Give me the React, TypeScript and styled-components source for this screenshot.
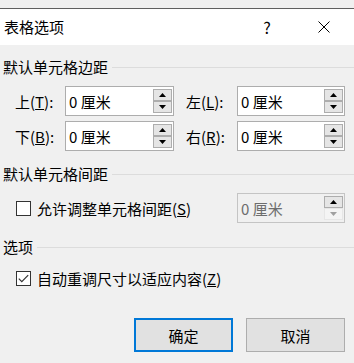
import React from 'react';
import styled, { createGlobalStyle } from 'styled-components';

const GlobalStyle = createGlobalStyle`
  html, body {
    margin: 0;
    padding: 0;
    background: #f0f0f0;
    overflow: hidden;
  }
  body {
    font-family: "Noto Sans CJK SC", "Microsoft YaHei", sans-serif;
    font-size: 15px;
    color: #000;
  }
`;

const Window = styled.div`
  width: 354px;
  margin-top: 8px;
  border-top: 1px solid #5f5f5f;
  background: #f0f0f0;
`;

const TitleBar = styled.div`
  height: 36px;
  background: #fff;
  display: flex;
  align-items: center;
  padding-left: 4px;
`;

const Title = styled.div`
  flex: 1;
  line-height: 20px;
`;

const HelpButton = styled.div`
  width: 8px;
  margin-right: 47px;
  font-size: 16px;
  line-height: 20px;
  text-align: center;
`;

const CloseButton = styled.div`
  width: 12px;
  height: 12px;
  margin-right: 24px;
  display: flex;
`;

const Content = styled.div`
  display: flex;
  flex-direction: column;
`;

const SectionHeading = styled.div<{ $top: number }>`
  display: flex;
  align-items: center;
  gap: 4px;
  height: 20px;
  padding-left: 3px;
  margin-top: ${p => p.$top}px;
  line-height: 20px;

  &::after {
    content: '';
    flex: 1;
    height: 1px;
    background: #dcdcdc;
  }
`;

const MarginGrid = styled.div`
  display: grid;
  grid-template-columns: 50px 109px 63px 108px;
  grid-auto-rows: 30px;
  row-gap: 5px;
  padding-left: 15px;
  margin-top: 9px;
`;

const FieldLabel = styled.label<{ $indent?: number }>`
  display: flex;
  align-items: center;
  padding-left: ${p => p.$indent ?? 0}px;
  white-space: nowrap;
`;

const SpinBox = styled.div<{ $disabled?: boolean }>`
  box-sizing: border-box;
  height: 30px;
  display: flex;
  align-items: center;
  padding-left: 3px;
  border: 1px solid ${p => (p.$disabled ? '#c4c4c4' : '#adadad')};
  background: ${p => (p.$disabled ? '#f0f0f0' : '#fff')};
  color: ${p => (p.$disabled ? '#6d6d6d' : '#000')};
`;

const SpinValue = styled.span`
  flex: 1;
  white-space: nowrap;
`;

const Spinner = styled.div`
  display: flex;
  flex-direction: column;
  margin-right: 1px;
`;

const SpinButton = styled.div<{ $faded?: boolean }>`
  box-sizing: border-box;
  width: 19px;
  height: 12px;
  display: flex;
  align-items: center;
  justify-content: center;
  border: 1px solid ${p => (p.$faded ? '#e6e6e6' : '#adadad')};
  background: ${p => (p.$faded ? '#f4f4f4' : '#e5e5e5')};
  color: ${p => (p.$faded ? '#a0a0a0' : '#000')};
`;

const CheckRow = styled.div<{ $top: number; $height: number }>`
  display: flex;
  align-items: center;
  height: ${p => p.$height}px;
  margin-top: ${p => p.$top}px;
  padding: 0 9px 0 16px;
`;

const CheckBox = styled.span`
  box-sizing: border-box;
  width: 15px;
  height: 15px;
  border: 1px solid #333;
  background: #fff;
  display: flex;
  align-items: center;
  justify-content: center;
  flex-shrink: 0;
`;

const CheckLabel = styled.label`
  margin-left: 6px;
  flex: 1;
  white-space: nowrap;
`;

const SpacingBox = styled(SpinBox)`
  width: 108px;
`;

const ButtonRow = styled.div`
  display: flex;
  justify-content: flex-end;
  gap: 13px;
  padding-right: 9px;
  margin-top: 32px;
`;

const DialogButton = styled.button<{ $primary?: boolean }>`
  box-sizing: border-box;
  width: 99px;
  height: 34px;
  font: inherit;
  color: #000;
  background: #e1e1e1;
  border: ${p => (p.$primary ? '2px solid #0078d7' : '1px solid #adadad')};
  padding: 0;
`;

const Arrow = ({ up }: { up?: boolean }) => (
  <svg width="7" height="4" viewBox="0 0 7 4">
    <polygon points={up ? '0,4 7,4 3.5,0' : '0,0 7,0 3.5,4'} fill="currentColor" />
  </svg>
);

const Spin = ({ disabled }: { disabled?: boolean }) => (
  <Spinner>
    <SpinButton>
      <Arrow up />
    </SpinButton>
    <SpinButton $faded={disabled}>
      <Arrow />
    </SpinButton>
  </Spinner>
);

const margins = [
  { label: '上', key: 'T', side: '左', sideKey: 'L' },
  { label: '下', key: 'B', side: '右', sideKey: 'R' },
];

export default function App() {
  return (
    <>
      <GlobalStyle />
      <Window>
        <TitleBar>
          <Title>表格选项</Title>
          <HelpButton>?</HelpButton>
          <CloseButton>
            <svg width="12" height="12" viewBox="0 0 12 12">
              <path d="M0.5 0.5 L11.5 11.5 M11.5 0.5 L0.5 11.5" stroke="#000" strokeWidth="1" />
            </svg>
          </CloseButton>
        </TitleBar>

        <Content>
          <SectionHeading $top={12}>默认单元格边距</SectionHeading>
          <MarginGrid>
            {margins.map(m => (
              <React.Fragment key={m.key}>
                <FieldLabel>
                  {m.label}(<u>{m.key}</u>):
                </FieldLabel>
                <SpinBox>
                  <SpinValue>0 厘米</SpinValue>
                  <Spin />
                </SpinBox>
                <FieldLabel $indent={12}>
                  {m.side}(<u>{m.sideKey}</u>):
                </FieldLabel>
                <SpinBox>
                  <SpinValue>0 厘米</SpinValue>
                  <Spin />
                </SpinBox>
              </React.Fragment>
            ))}
          </MarginGrid>

          <SectionHeading $top={13}>默认单元格间距</SectionHeading>
          <CheckRow $top={9} $height={30}>
            <CheckBox />
            <CheckLabel>
              允许调整单元格间距(<u>S</u>)
            </CheckLabel>
            <SpacingBox $disabled>
              <SpinValue>0 厘米</SpinValue>
              <Spin disabled />
            </SpacingBox>
          </CheckRow>

          <SectionHeading $top={14}>选项</SectionHeading>
          <CheckRow $top={14} $height={15}>
            <CheckBox>
              <svg width="11" height="9" viewBox="0 0 11 9">
                <path d="M0.8 4.6 L3.8 7.6 L10.2 1.2" stroke="#333" strokeWidth="1.2" fill="none" />
              </svg>
            </CheckBox>
            <CheckLabel>
              自动重调尺寸以适应内容(<u>Z</u>)
            </CheckLabel>
          </CheckRow>

          <ButtonRow>
            <DialogButton $primary>确定</DialogButton>
            <DialogButton>取消</DialogButton>
          </ButtonRow>
        </Content>
      </Window>
    </>
  );
}
